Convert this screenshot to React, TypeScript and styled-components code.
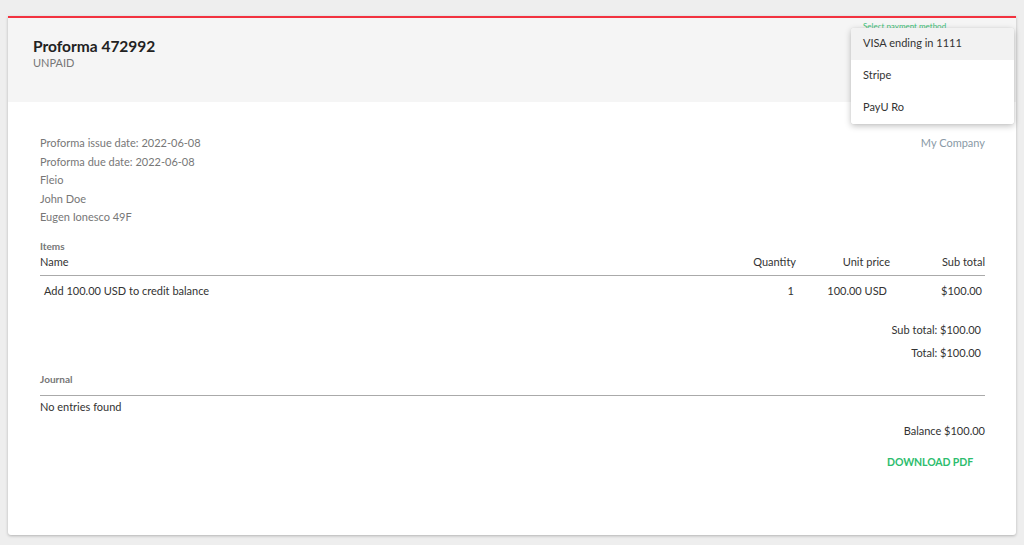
import React from "react";
import styled, { createGlobalStyle } from "styled-components";

const GlobalStyle = createGlobalStyle`
  html, body { margin: 0; padding: 0; }
  body {
    background: #eeeeee;
    font-family: "Lato", "Liberation Sans", sans-serif;
    color: #333;
  }
`;

const Page = styled.div`
  padding: 16px 8px 10px 8px;
  position: relative;
`;

const Card = styled.div`
  background: #fff;
  border-top: 2px solid #f2323f;
  border-radius: 0 0 3px 3px;
  box-shadow: 0 1px 3px rgba(0, 0, 0, 0.25);
  height: 517px;
  display: flex;
  flex-direction: column;
  position: relative;
`;

const Header = styled.div`
  background: #f5f5f5;
  height: 84px;
  padding: 18px 25px 0;
  box-sizing: border-box;
`;

const Title = styled.div`
  font-size: 15.5px;
  font-weight: 700;
  color: #222;
  line-height: 20px;
`;

const Status = styled.div`
  font-size: 11px;
  color: #777;
  line-height: 14px;
  margin-top: 0;
`;

const Body = styled.div`
  padding: 32px 31px 0 32px;
  display: flex;
  flex-direction: column;
`;

const InfoRow = styled.div`
  display: flex;
  justify-content: space-between;
`;

const InfoList = styled.div`
  display: flex;
  flex-direction: column;
`;

const InfoLine = styled.div`
  font-size: 11px;
  color: #777;
  line-height: 18.5px;
`;

const Company = styled.div`
  font-size: 11px;
  color: #8a9aa6;
  line-height: 18.5px;
`;

const SectionLabel = styled.div<{ $mt: number }>`
  font-size: 10px;
  font-weight: 700;
  color: #777;
  margin-top: ${(p) => p.$mt}px;
  line-height: 13px;
`;

const Table = styled.div`
  display: grid;
  grid-template-columns: 1fr 90px 94px 95px;
`;

const HeadCell = styled.div<{ $right?: boolean }>`
  font-size: 11px;
  color: #333;
  text-align: ${(p) => (p.$right ? "right" : "left")};
  line-height: 16px;
  padding-top: 1px;
  padding-bottom: 5px;
  border-bottom: 1px solid #aaa;
`;

const Cell = styled.div<{ $right?: boolean; $pad?: number }>`
  font-size: 11px;
  color: #333;
  text-align: ${(p) => (p.$right ? "right" : "left")};
  padding: 7px ${(p) => p.$pad ?? 0}px 0 ${(p) => (p.$right ? 0 : 4)}px;
  line-height: 16px;
`;

const TotalLine = styled.div<{ $mt: number }>`
  font-size: 11px;
  color: #333;
  text-align: right;
  padding-right: 4px;
  margin-top: ${(p) => p.$mt}px;
  line-height: 16px;
`;

const Divider = styled.div`
  border-bottom: 1px solid #aaa;
  margin-top: 9px;
`;

const Plain = styled.div`
  font-size: 11px;
  color: #333;
  line-height: 16px;
  margin-top: 3px;
`;

const Balance = styled.div`
  font-size: 11px;
  color: #333;
  text-align: right;
  line-height: 16px;
  margin-top: 8px;
`;

const DownloadRow = styled.div`
  display: flex;
  justify-content: flex-end;
  margin-top: 15px;
  padding-right: 12px;
`;

const DownloadButton = styled.button`
  background: none;
  border: none;
  padding: 0;
  font-family: inherit;
  font-size: 10.5px;
  font-weight: 700;
  color: #2dbd6e;
  letter-spacing: -0.1px;
  line-height: 16px;
  cursor: pointer;
`;

const SelectLabel = styled.div`
  position: absolute;
  left: 863px;
  top: 21px;
  font-size: 8px;
  color: #3cbf75;
  line-height: 10px;
`;

const Menu = styled.div`
  position: absolute;
  left: 851px;
  top: 28px;
  width: 163px;
  background: #fff;
  border-radius: 3px;
  box-shadow: 0 2px 6px rgba(0, 0, 0, 0.25), 0 0 1px rgba(0, 0, 0, 0.15);
  display: flex;
  flex-direction: column;
  overflow: hidden;
`;

const MenuItem = styled.div<{ $active?: boolean }>`
  height: 32px;
  box-sizing: border-box;
  display: flex;
  align-items: center;
  padding: 0 0 3px 12px;
  font-size: 11px;
  color: #333;
  background: ${(p) => (p.$active ? "#f2f2f2" : "#fff")};
`;

export default function App() {
  return (
    <>
      <GlobalStyle />
      <Page>
        <Card>
          <Header>
            <Title>Proforma 472992</Title>
            <Status>UNPAID</Status>
          </Header>
          <Body>
            <InfoRow>
              <InfoList>
                <InfoLine>Proforma issue date: 2022-06-08</InfoLine>
                <InfoLine>Proforma due date: 2022-06-08</InfoLine>
                <InfoLine>Fleio</InfoLine>
                <InfoLine>John Doe</InfoLine>
                <InfoLine>Eugen Ionesco 49F</InfoLine>
              </InfoList>
              <Company>My Company</Company>
            </InfoRow>
            <SectionLabel $mt={13}>Items</SectionLabel>
            <Table>
              <HeadCell>Name</HeadCell>
              <HeadCell $right>Quantity</HeadCell>
              <HeadCell $right>Unit price</HeadCell>
              <HeadCell $right>Sub total</HeadCell>
              <Cell>Add 100.00 USD to credit balance</Cell>
              <Cell $right $pad={2}>1</Cell>
              <Cell $right $pad={3}>100.00 USD</Cell>
              <Cell $right $pad={3}>$100.00</Cell>
            </Table>
            <TotalLine $mt={23}>Sub total: $100.00</TotalLine>
            <TotalLine $mt={7}>Total: $100.00</TotalLine>
            <SectionLabel $mt={12}>Journal</SectionLabel>
            <Divider />
            <Plain>No entries found</Plain>
            <Balance>Balance $100.00</Balance>
            <DownloadRow>
              <DownloadButton>DOWNLOAD PDF</DownloadButton>
            </DownloadRow>
          </Body>
        </Card>
        <SelectLabel>Select payment method</SelectLabel>
        <Menu>
          <MenuItem $active>VISA ending in 1111</MenuItem>
          <MenuItem>Stripe</MenuItem>
          <MenuItem>PayU Ro</MenuItem>
        </Menu>
      </Page>
    </>
  );
}
